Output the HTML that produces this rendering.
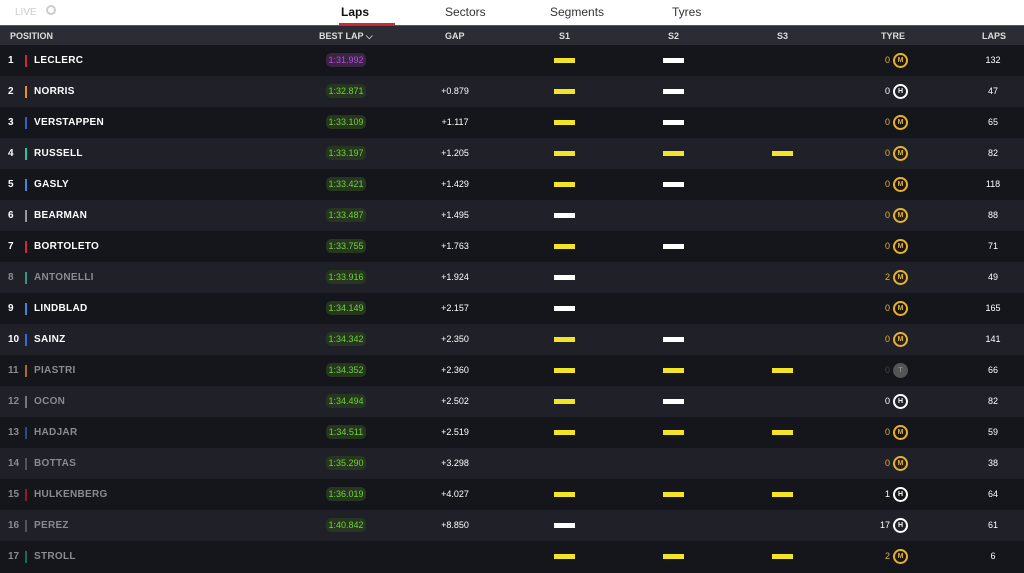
<!DOCTYPE html><html><head><meta charset="utf-8"><style>
body{margin:0;width:1024px;height:573px;overflow:hidden;background:#15161c;font-family:"Liberation Sans",sans-serif}
.top{height:25px;background:#fff;position:relative;border-bottom:1px solid #555}
.top span{position:absolute;top:5px;font-size:12px;color:#333}
.hd{position:absolute;top:26px;left:0;width:1024px;height:19px;background:#2c2d34;color:#ddd;font-size:9px;font-weight:bold}
.hd span,.r span{position:absolute}
.r{position:absolute;left:0;width:1024px;height:31px;font-size:10px;color:#fff}
.o{background:#15161c}.e{background:#1f2028}
.p{left:8px;top:10px;font-weight:bold;font-size:10px}
.b{left:25px;top:10px;width:2px;height:12px}
.n{left:34px;top:10px;font-weight:bold;font-size:10px;letter-spacing:0.3px}
.l{left:326px;top:8px;width:40px;height:14px;border-radius:5px;background:#26361f;color:#6fd23a;font-size:9px;text-align:center;line-height:14px}
.l.pu{background:#3b2444;color:#b24fd6}
.g{left:430px;width:50px;text-align:center;top:10px;font-size:9px}
.s{top:13px;width:21px;height:5px}
.Y{background:#f3e526}.W{background:#fff}
.t{left:870px;top:10px;width:20px;text-align:right;font-size:9px}
.ic{left:893px;top:8px;width:11px;height:11px;border:2px solid;border-radius:50%;font-size:7px;font-weight:bold;text-align:center;line-height:11px}
.M{color:#e8b32a;border-color:#e8b32a}.H{color:#fff;border-color:#fff}.T{color:#888;border-color:#555;background:#555}
.lp{left:975px;width:36px;text-align:center;top:10px;font-size:9px}
.d .p,.d .n{color:#8a8b90}
</style></head><body>
<div class="top"><span style="left:15px;color:#ccc;font-size:10px;top:7px">LIVE</span><span style="left:46px;top:5px;width:6px;height:6px;border:2px solid #ccc;border-radius:50%"></span>
<span style="left:341px;font-weight:bold;color:#111">Laps</span><div style="position:absolute;left:339px;top:23px;width:56px;height:2px;background:#d0283a"></div>
<span style="left:445px">Sectors</span><span style="left:550px">Segments</span><span style="left:672px">Tyres</span></div>
<div class="hd"><span style="left:10px;top:5px">POSITION</span><span style="left:319px;top:5px">BEST LAP ⌵</span><span style="left:445px;top:5px">GAP</span><span style="left:559px;top:5px">S1</span><span style="left:668px;top:5px">S2</span><span style="left:777px;top:5px">S3</span><span style="left:881px;top:5px">TYRE</span><span style="left:982px;top:5px">LAPS</span></div>

<div class="r o" style="top:45px"><span class="p">1</span><span class="b" style="background:#d0283a"></span><span class="n">LECLERC</span><span class="l pu">1:31.992</span><span class="s Y" style="left:554px"></span><span class="s W" style="left:663px"></span><span class="t" style="color:#e8b32a">0</span><span class="ic M">M</span><span class="lp">132</span></div>
<div class="r e" style="top:76px"><span class="p">2</span><span class="b" style="background:#f08a2a"></span><span class="n">NORRIS</span><span class="l">1:32.871</span><span class="g">+0.879</span><span class="s Y" style="left:554px"></span><span class="s W" style="left:663px"></span><span class="t">0</span><span class="ic H">H</span><span class="lp">47</span></div>
<div class="r o" style="top:107px"><span class="p">3</span><span class="b" style="background:#3a5fc4"></span><span class="n">VERSTAPPEN</span><span class="l">1:33.109</span><span class="g">+1.117</span><span class="s Y" style="left:554px"></span><span class="s W" style="left:663px"></span><span class="t" style="color:#e8b32a">0</span><span class="ic M">M</span><span class="lp">65</span></div>
<div class="r e" style="top:138px"><span class="p">4</span><span class="b" style="background:#2ac4a8"></span><span class="n">RUSSELL</span><span class="l">1:33.197</span><span class="g">+1.205</span><span class="s Y" style="left:554px"></span><span class="s Y" style="left:663px"></span><span class="s Y" style="left:772px"></span><span class="t" style="color:#e8b32a">0</span><span class="ic M">M</span><span class="lp">82</span></div>
<div class="r o" style="top:169px"><span class="p">5</span><span class="b" style="background:#3a8ad8"></span><span class="n">GASLY</span><span class="l">1:33.421</span><span class="g">+1.429</span><span class="s Y" style="left:554px"></span><span class="s W" style="left:663px"></span><span class="t" style="color:#e8b32a">0</span><span class="ic M">M</span><span class="lp">118</span></div>
<div class="r e" style="top:200px"><span class="p">6</span><span class="b" style="background:#999"></span><span class="n">BEARMAN</span><span class="l">1:33.487</span><span class="g">+1.495</span><span class="s W" style="left:554px"></span><span class="t" style="color:#e8b32a">0</span><span class="ic M">M</span><span class="lp">88</span></div>
<div class="r o" style="top:231px"><span class="p">7</span><span class="b" style="background:#d0283a"></span><span class="n">BORTOLETO</span><span class="l">1:33.755</span><span class="g">+1.763</span><span class="s Y" style="left:554px"></span><span class="s W" style="left:663px"></span><span class="t" style="color:#e8b32a">0</span><span class="ic M">M</span><span class="lp">71</span></div>
<div class="r e d" style="top:262px"><span class="p">8</span><span class="b" style="background:#2a9a88"></span><span class="n">ANTONELLI</span><span class="l">1:33.916</span><span class="g">+1.924</span><span class="s W" style="left:554px"></span><span class="t" style="color:#e8b32a">2</span><span class="ic M">M</span><span class="lp">49</span></div>
<div class="r o" style="top:293px"><span class="p">9</span><span class="b" style="background:#3a8ad8"></span><span class="n">LINDBLAD</span><span class="l">1:34.149</span><span class="g">+2.157</span><span class="s W" style="left:554px"></span><span class="t" style="color:#e8b32a">0</span><span class="ic M">M</span><span class="lp">165</span></div>
<div class="r e" style="top:324px"><span class="p">10</span><span class="b" style="background:#3a6ad8"></span><span class="n">SAINZ</span><span class="l">1:34.342</span><span class="g">+2.350</span><span class="s Y" style="left:554px"></span><span class="s W" style="left:663px"></span><span class="t" style="color:#e8b32a">0</span><span class="ic M">M</span><span class="lp">141</span></div>
<div class="r o d" style="top:355px"><span class="p">11</span><span class="b" style="background:#b06a20"></span><span class="n">PIASTRI</span><span class="l">1:34.352</span><span class="g">+2.360</span><span class="s Y" style="left:554px"></span><span class="s Y" style="left:663px"></span><span class="s Y" style="left:772px"></span><span class="t" style="color:#444">0</span><span class="ic T">T</span><span class="lp">66</span></div>
<div class="r e d" style="top:386px"><span class="p">12</span><span class="b" style="background:#777"></span><span class="n">OCON</span><span class="l">1:34.494</span><span class="g">+2.502</span><span class="s Y" style="left:554px"></span><span class="s W" style="left:663px"></span><span class="t">0</span><span class="ic H">H</span><span class="lp">82</span></div>
<div class="r o d" style="top:417px"><span class="p">13</span><span class="b" style="background:#2c4a80"></span><span class="n">HADJAR</span><span class="l">1:34.511</span><span class="g">+2.519</span><span class="s Y" style="left:554px"></span><span class="s Y" style="left:663px"></span><span class="s Y" style="left:772px"></span><span class="t" style="color:#e8b32a">0</span><span class="ic M">M</span><span class="lp">59</span></div>
<div class="r e d" style="top:448px"><span class="p">14</span><span class="b" style="background:#555"></span><span class="n">BOTTAS</span><span class="l">1:35.290</span><span class="g">+3.298</span><span class="t" style="color:#e8b32a">0</span><span class="ic M">M</span><span class="lp">38</span></div>
<div class="r o d" style="top:479px"><span class="p">15</span><span class="b" style="background:#8a1e2a"></span><span class="n">HULKENBERG</span><span class="l">1:36.019</span><span class="g">+4.027</span><span class="s Y" style="left:554px"></span><span class="s Y" style="left:663px"></span><span class="s Y" style="left:772px"></span><span class="t">1</span><span class="ic H">H</span><span class="lp">64</span></div>
<div class="r e d" style="top:510px"><span class="p">16</span><span class="b" style="background:#555"></span><span class="n">PEREZ</span><span class="l">1:40.842</span><span class="g">+8.850</span><span class="s W" style="left:554px"></span><span class="t">17</span><span class="ic H">H</span><span class="lp">61</span></div>
<div class="r o d" style="top:541px"><span class="p">17</span><span class="b" style="background:#1e6a58"></span><span class="n">STROLL</span><span class="s Y" style="left:554px"></span><span class="s Y" style="left:663px"></span><span class="s Y" style="left:772px"></span><span class="t" style="color:#e8b32a">2</span><span class="ic M">M</span><span class="lp">6</span></div>
</body></html>
